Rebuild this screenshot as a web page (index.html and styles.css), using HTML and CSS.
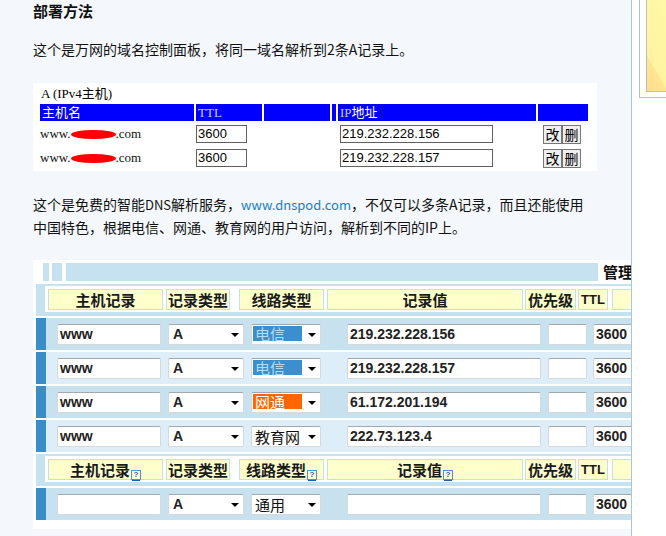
FILE: index.html
```html
<!DOCTYPE html>
<html lang="zh-CN">
<head>
<meta charset="utf-8">
<title>部署方法</title>
<link rel="stylesheet" href="styles.css">
</head>
<body>
<div class="page">
  <div class="main">
    <h3 class="title">部署方法</h3>
    <p class="text">这个是万网的域名控制面板，将同一域名解析到2条A记录上。</p>

    <div class="box1">
      <div class="caption">A (IPv4主机)</div>
      <table class="t1">
        <colgroup>
          <col class="c1"><col class="c2"><col class="c3"><col class="c4"><col class="c5"><col class="c6">
        </colgroup>
        <tr class="t1-head">
          <td>主机名</td><td><span class="lav">TTL</span></td><td></td><td></td><td><span class="lav">IP</span>地址</td><td></td>
        </tr>
        <tr>
          <td class="host">www.<span class="blot"></span>.com</td>
          <td><span class="inp ttl">3600</span></td><td></td><td></td>
          <td class="ipcell"><span class="inp ip">219.232.228.156</span></td>
          <td class="btncell"><span class="btn">改</span><span class="btn">删</span></td>
        </tr>
        <tr>
          <td class="host">www.<span class="blot"></span>.com</td>
          <td><span class="inp ttl">3600</span></td><td></td><td></td>
          <td class="ipcell"><span class="inp ip">219.232.228.157</span></td>
          <td class="btncell"><span class="btn">改</span><span class="btn">删</span></td>
        </tr>
      </table>
    </div>

    <p class="text two">这个是免费的智能<span class="lat">DNS</span>解析服务，<a class="link lat">www.dnspod.com</a>，不仅可以多条A记录，而且还能使用<br>中国特色，根据电信、网通、教育网的用户访问，解析到不同的IP上。</p>

    <div class="panel">
      <div class="bar">
        <span class="tab tab-a"></span><span class="tab tab-b"></span><span class="bar-fill"></span><span class="bar-title">管理</span>
      </div>

      <div class="hdr">
        <div class="hdr-in">
          <div class="hc w-host">主机记录</div>
          <div class="hc w-type">记录类型</div>
          <div class="hc w-line">线路类型</div>
          <div class="hc w-val">记录值</div>
          <div class="hc w-pri">优先级</div>
          <div class="hc w-ttl en">TTL</div>
          <div class="hc w-more"></div>
        </div>
      </div>

      <div class="row odd">
        <span class="fld f-host">www</span>
        <span class="fld sel f-type">A</span>
        <span class="fld sel f-line"><span class="hl hl-blue">电信</span></span>
        <span class="fld f-val">219.232.228.156</span>
        <span class="fld f-pri"></span>
        <span class="fld f-ttl">3600</span>
      </div>
      <div class="row even">
        <span class="fld f-host">www</span>
        <span class="fld sel f-type">A</span>
        <span class="fld sel f-line"><span class="hl hl-blue">电信</span></span>
        <span class="fld f-val">219.232.228.157</span>
        <span class="fld f-pri"></span>
        <span class="fld f-ttl">3600</span>
      </div>
      <div class="row odd">
        <span class="fld f-host">www</span>
        <span class="fld sel f-type">A</span>
        <span class="fld sel f-line"><span class="hl hl-orange">网通</span></span>
        <span class="fld f-val">61.172.201.194</span>
        <span class="fld f-pri"></span>
        <span class="fld f-ttl">3600</span>
      </div>
      <div class="row even">
        <span class="fld f-host">www</span>
        <span class="fld sel f-type">A</span>
        <span class="fld sel f-line"><span class="opt">教育网</span></span>
        <span class="fld f-val">222.73.123.4</span>
        <span class="fld f-pri"></span>
        <span class="fld f-ttl">3600</span>
      </div>

      <div class="hdr">
        <div class="hdr-in">
          <div class="hc w-host">主机记录<span class="help">?</span></div>
          <div class="hc w-type">记录类型</div>
          <div class="hc w-line">线路类型<span class="help">?</span></div>
          <div class="hc w-val">记录值<span class="help">?</span></div>
          <div class="hc w-pri">优先级</div>
          <div class="hc w-ttl en">TTL</div>
          <div class="hc w-more"></div>
        </div>
      </div>

      <div class="row odd">
        <span class="fld f-host"></span>
        <span class="fld sel f-type">A</span>
        <span class="fld sel f-line"><span class="opt">通用</span></span>
        <span class="fld f-val"></span>
        <span class="fld f-pri"></span>
        <span class="fld f-ttl">3600</span>
      </div>
    </div>
  </div>
  <div class="side">
    <div class="thumb"><div class="thumb-img"></div></div>
  </div>
</div>
</body>
</html>
```

FILE: styles.css
```css
html, body {
  margin: 0;
  padding: 0;
}
body {
  background: #ffffff;
  font-family: "Noto Sans CJK SC", sans-serif;
  color: #111;
}
.page {
  display: flex;
  height: 536px;
}
.main {
  flex: none;
  width: 632px;
  height: 536px;
  box-sizing: border-box;
  background: #f4f8fc;
  border-right: 1px solid #a9c6d8;
  padding-left: 33px;
  overflow: hidden;
}
.title {
  margin: 0;
  padding-top: 1px;
  font-size: 15px;
  line-height: 20px;
  font-weight: bold;
  color: #111;
}
.text {
  margin: 17px 0 0 0;
  font-size: 14px;
  line-height: 23px;
  color: #111;
  white-space: nowrap;
}
.text.two {
  margin-top: 22px;
}
.lat {
  font-size: 13px;
}
.link {
  color: #1c7ec2;
  text-decoration: none;
}

/* first table */
.box1 {
  margin-top: 22px;
  width: 564px;
  box-sizing: border-box;
  background: #ffffff;
  padding: 2px 7px 0 5px;
  height: 88px;
}
.caption {
  height: 17px;
  line-height: 17px;
  padding-left: 3px;
  font-family: "Liberation Serif", "Noto Sans CJK SC", serif;
  font-size: 13px;
  color: #000;
}
.t1 {
  border-collapse: separate;
  border-spacing: 2px;
  table-layout: fixed;
  width: 552px;
  font-family: "Liberation Serif", "Noto Sans CJK SC", serif;
  font-size: 13px;
}
.t1 td {
  padding: 0;
  height: 22px;
  vertical-align: middle;
  white-space: nowrap;
}
.c1 { width: 154px; }
.c2 { width: 66px; }
.c3 { width: 66px; }
.c4 { width: 4px; }
.c5 { width: 198px; }
.c6 { width: 50px; }
.t1 .t1-head td {
  height: 17px;
  line-height: 17px;
  background: #0000ff;
  color: #ffffff;
  padding-left: 2px;
}
.t1 .t1-head td:nth-child(4) {
  padding-left: 0;
}
.lav {
  color: #cfc8ff;
}
.host {
  color: #111;
}
.blot {
  display: inline-block;
  width: 45px;
  height: 9px;
  background: #ff0000;
  border-radius: 50%;
  vertical-align: -1px;
  filter: blur(0.4px);
}
.inp {
  display: inline-block;
  box-sizing: border-box;
  height: 18px;
  border: 1px solid #606060;
  background: #fff;
  font-family: "Liberation Sans", sans-serif;
  font-size: 13px;
  line-height: 16px;
  padding-left: 1px;
  color: #000;
  vertical-align: middle;
}
.ttl { width: 51px; }
.ip { width: 153px; }
.t1 td.ipcell { padding-left: 2px; }
.t1 td.btncell { padding-left: 5px; }
.btn {
  display: inline-block;
  box-sizing: border-box;
  width: 19px;
  height: 19px;
  border: 1px solid #767676;
  background: #efefef;
  font-family: "Noto Sans CJK SC", sans-serif;
  font-size: 14px;
  line-height: 16px;
  text-align: center;
  color: #000;
  vertical-align: middle;
}

/* second panel */
.panel {
  margin-top: 21px;
  width: 700px;
  background: #ffffff;
  padding: 3px 0 7px 3px;
}
.bar {
  display: flex;
  height: 18px;
  margin-bottom: 3px;
}
.tab {
  background: #c6e1ef;
  flex: none;
}
.tab-a { margin-left: 7px; width: 6px; }
.tab-b { margin-left: 3px; width: 10px; }
.bar-fill {
  margin-left: 4px;
  width: 532px;
  flex: none;
  background: #c6e1ef;
}
.bar-title {
  margin-left: 5px;
  font-weight: bold;
  font-size: 15px;
  line-height: 18px;
  color: #111;
  white-space: nowrap;
}
.hdr {
  height: 32px;
  box-sizing: border-box;
  margin-bottom: 2px;
  background: #c6e1ef;
  padding: 2px 0 4px 9px;
}
.hdr-in {
  height: 26px;
  background: #ffffff;
  display: flex;
  align-items: center;
  padding-left: 3px;
}
.hc {
  flex: none;
  height: 21px;
  box-sizing: border-box;
  background: #ffffcc;
  border: 1px solid #c5dfee;
  font-weight: bold;
  font-size: 15px;
  line-height: 19px;
  text-align: center;
  color: #1a1a1a;
  white-space: nowrap;
}
.hc.en {
  font-family: "Liberation Sans", sans-serif;
  font-size: 13px;
}
.w-host { width: 115px; }
.w-type { width: 64px; margin-left: 3px; }
.w-line { width: 85px; margin-left: 9px; }
.w-val { width: 196px; margin-left: 3px; }
.w-pri { width: 51px; margin-left: 2px; }
.w-ttl { width: 30px; margin-left: 2px; }
.w-more { width: 60px; margin-left: 4px; }
.help {
  display: inline-block;
  box-sizing: border-box;
  width: 10px;
  height: 10px;
  margin-left: 1px;
  border: 1px solid #4f8fd6;
  font-family: "Liberation Sans", sans-serif;
  font-size: 8px;
  line-height: 8px;
  font-weight: bold;
  color: #1a5fc0;
  text-align: center;
  vertical-align: -1px;
  box-shadow: 0 2px 0 -1px #1a5fc0;
}
.row {
  height: 32px;
  margin-bottom: 2px;
  display: flex;
  align-items: center;
  border-left: 10px solid #3a8dc7;
}
.row.odd { background: #c7e1ef; }
.row.even { background: #ddeef9; }
.fld {
  flex: none;
  position: relative;
  height: 21px;
  box-sizing: border-box;
  background: #ffffff;
  border: 1px solid #d4d9de;
  border-top-color: #a3a8ad;
  border-radius: 2px;
  font-family: "Liberation Sans", "Noto Sans CJK SC", sans-serif;
  font-weight: bold;
  font-size: 14px;
  line-height: 19px;
  color: #222;
  padding-left: 2px;
  white-space: nowrap;
}
.sel::after {
  content: "";
  position: absolute;
  right: 4px;
  top: 8px;
  border-left: 4px solid transparent;
  border-right: 4px solid transparent;
  border-top: 4px solid #000;
}
.f-host { width: 104px; margin-left: 11px; }
.f-type { width: 76px; margin-left: 7px; padding-left: 4px; }
.f-line { width: 70px; margin-left: 7px; padding-left: 1px; }
.f-val { width: 194px; margin-left: 26px; }
.f-pri { width: 39px; margin-left: 7px; }
.f-ttl { width: 45px; margin-left: 6px; }
.hl {
  display: inline-block;
  width: 49px;
  height: 15px;
  margin-top: 1px;
  vertical-align: top;
  font-family: "Noto Sans CJK SC", sans-serif;
  font-weight: normal;
  font-size: 15px;
  line-height: 15px;
  padding-left: 2px;
  box-sizing: border-box;
}
.hl-blue { background: #3a8fcc; color: #b4dcf6; }
.hl-orange { background: #ff6600; color: #ffffff; }
.opt {
  font-family: "Noto Sans CJK SC", sans-serif;
  font-weight: normal;
  font-size: 15px;
  color: #111;
  padding-left: 2px;
}

/* right side */
.side {
  flex: 1;
  background: #ffffff;
}
.thumb {
  margin-left: 7px;
  height: 98px;
  box-sizing: border-box;
  border-left: 1px solid #a9c2d4;
  border-bottom: 1px solid #a9c2d4;
  padding: 0 0 5px 6px;
}
.thumb-img {
  height: 92px;
  box-sizing: border-box;
  border-left: 1px solid #c2bacb;
  border-bottom: 1px solid #c2bacb;
  background: linear-gradient(60deg, #ffdd88 0%, #ffe594 28%, #fff3a0 29%, #fff8a6 100%);
}
```
